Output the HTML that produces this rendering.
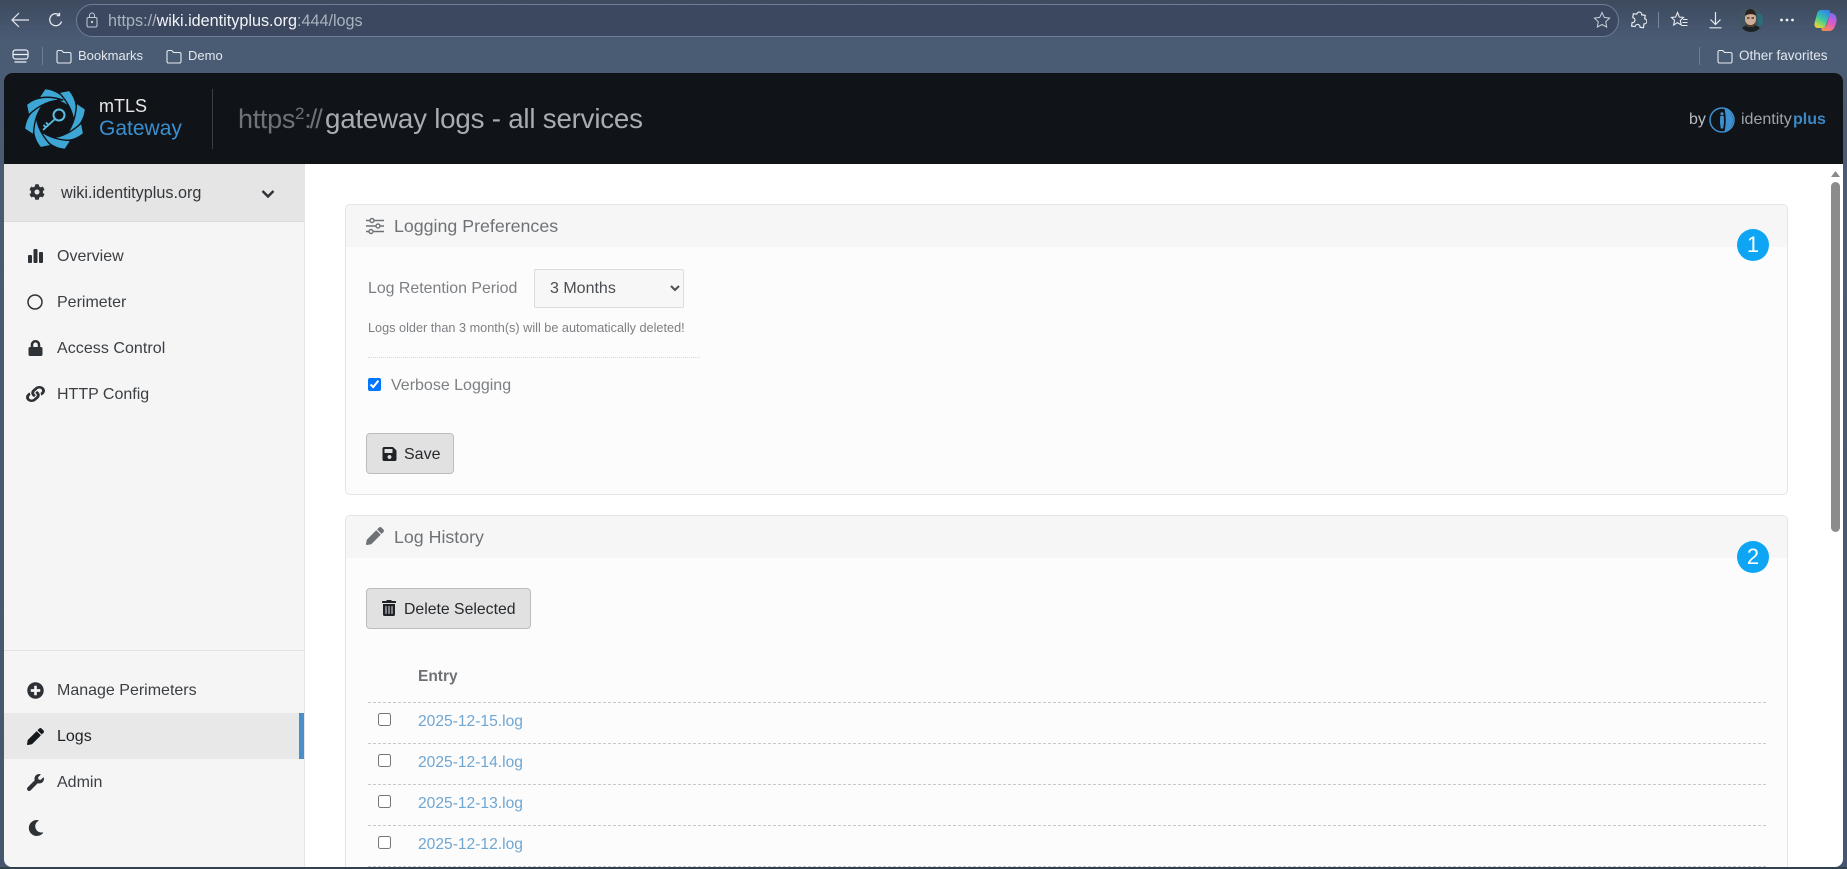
<!DOCTYPE html>
<html lang="en"><head><meta charset="utf-8"><title>gateway logs</title>
<style>
html,body{margin:0;padding:0;width:1847px;height:869px;overflow:hidden}
body{position:relative;background:linear-gradient(180deg,#3d4a5e 0,#4a5b74 40px,#46566e 100%);font-family:"Liberation Sans",sans-serif}
.t{position:absolute;white-space:nowrap;line-height:20px;height:20px}
svg{position:absolute;display:block}
.a{position:absolute}
.nav{font-size:16px;color:#3a3f44}
.bm{font-size:13px;color:#e4e8ee}
.line{position:absolute;left:368px;width:1398px;border-top:1px dashed #c8c8c8;height:0}
.lnk{font-size:15.6px;color:#6fa6d2;left:418px}
input[type=checkbox]{position:absolute;margin:0;width:13px;height:13px}
.btn{position:absolute;box-sizing:border-box;background:#e1e1e1;border:1px solid #bcbcbc;border-radius:4px;height:41px}
.badge{position:absolute;left:1737px;width:32px;height:32px;border-radius:50%;background:#0ea5f5;color:#fff;text-align:center;line-height:32px;font-size:22px}
</style></head><body>

<!-- browser chrome -->
<div class="a" style="left:76px;top:4px;width:1541px;height:31px;border:1px solid #6f7e94;border-radius:17px;background:#3b485f"></div>
<svg style="left:9px;top:10px" width="22" height="20" viewBox="0 0 22 20" fill="none" stroke="#e6eaf0" stroke-width="1.2"><path d="M20 10H3M10 3l-7 7 7 7"/></svg>
<svg style="left:48px;top:12px" width="16" height="16" viewBox="0 0 16 16" fill="none" stroke="#e6eaf0" stroke-width="1.3"><path d="M13.5 9.5A6 6 0 1 1 11.5 3M11.5 .8V3.6H8.7"/></svg>
<svg style="left:86px;top:12px" width="12" height="16" viewBox="0 0 12 16" fill="none" stroke="#c5ccd6" stroke-width="1"><rect x="1" y="5.5" width="10" height="9.5" rx="1.5"/><path d="M3.5 5.5V3.5a2.5 2.5 0 0 1 5 0v2"/><circle cx="6" cy="10" r=".7" fill="#c5ccd6"/></svg>
<span class="t" style="left:108px;top:11px;font-size:16.2px;color:#a9b2be">https://<span style="color:#f2f4f7">wiki.identityplus.org</span>:444/logs</span>
<svg style="left:1593px;top:11px" width="18" height="18" viewBox="0 0 18 18" fill="none" stroke="#c9d0da" stroke-width="1"><path d="M9 1.5l2.3 4.9 5.3.7-3.9 3.7 1 5.3L9 13.5l-4.7 2.6 1-5.3L1.400 7.100l5.300-.7z"/></svg>
<svg style="left:1630px;top:11px" width="17" height="18" viewBox="0 0 17 18" fill="none" stroke="#e6eaf0" stroke-width="1.2"><path d="M6 3.500a2.500 2.500 0 0 1 5 0h3.500v3.500a2.500 2.500 0 0 1 0 5V16H11a2.500 2.500 0 0 0-5 0H2.500v-3.500a2.500 2.500 0 0 0 0-5V3.500z" stroke-linejoin="round" transform="rotate(8 8.500 9)"/></svg>
<div class="a" style="left:1658px;top:12px;width:1px;height:16px;background:#76859a"></div>
<svg style="left:1670px;top:11px" width="18" height="18" viewBox="0 0 18 18" fill="none" stroke="#e6eaf0" stroke-width="1.1"><path d="M7.500 1.500l1.800 4.500 4.200.4-3.200 3 1 4.600-3.800-2.400-3.900 2.400 1-4.600L1.500 6.400l4.200-.4zM13 8.500h4.500M12.500 11.500h5M12 14.500h5.500"/></svg>
<svg style="left:1708px;top:11px" width="15" height="18" viewBox="0 0 15 18" fill="none" stroke="#e6eaf0" stroke-width="1.2"><path d="M7.500 1v12M2.500 8.500l5 5 5-5M1.500 16.800h12"/></svg>
<svg style="left:1739px;top:8px" width="24" height="24" viewBox="0 0 24 24"><defs><clipPath id="av"><circle cx="12" cy="12" r="12"/></clipPath></defs><g clip-path="url(#av)"><rect width="24" height="24" fill="#3f5560"/><path d="M2 24c0-5 4-7 10-7s10 2 10 7z" fill="#1c2226"/><path d="M19 6h5v12h-5z" fill="#2d6b78"/><ellipse cx="11.500" cy="10.500" rx="5.500" ry="7.500" fill="#cfae98"/><path d="M6 8c0-5 3-7 5.500-7S17 3 17 8c-2-2.500-8-2.500-11 0z" fill="#2a2320"/><path d="M7 14c1 4 8 4 9 0l-1 5H8z" fill="#54402f"/><path d="M8 10h2.500M12.500 10H15" stroke="#2a2320" stroke-width="1.200"/></g></svg>
<svg style="left:1779px;top:17px" width="16" height="6" viewBox="0 0 16 6" fill="#f0f2f5"><circle cx="2.500" cy="3" r="1.400"/><circle cx="8" cy="3" r="1.400"/><circle cx="13.500" cy="3" r="1.400"/></svg>
<svg style="left:1814px;top:9px" width="23" height="23" viewBox="0 0 23 23"><defs><linearGradient id="c1" x1="0.700" y1="0" x2="0.200" y2="1"><stop offset="0" stop-color="#2f86ee"/><stop offset=".5" stop-color="#38c8a0"/><stop offset=".85" stop-color="#b8d84a"/><stop offset="1" stop-color="#f5c83e"/></linearGradient><linearGradient id="c2" x1="0.700" y1="0" x2="0.300" y2="1"><stop offset="0" stop-color="#7a6cf0"/><stop offset=".5" stop-color="#e058c8"/><stop offset="1" stop-color="#f88a50"/></linearGradient></defs><path d="M7 1h7c2 0 2.500 1.500 2 3L12 16c-.6 2-2 3-4 3H4c-3 0-4-2.500-3.400-5L3 5c.6-2.500 2-4 4-4z" fill="url(#c1)"/><path d="M16 4c3 0 6 1.500 6.500 5 .3 3-.5 6-1.500 8-1 3-3 5-5.500 5H10c-2 0-3-1-2.500-3 3 0 4.500-1 5.500-4z" fill="url(#c2)"/></svg>

<svg style="left:12px;top:48px" width="17" height="16" viewBox="0 0 17 16" fill="none" stroke="#eef1f5" stroke-width="1.2"><rect x="1" y="2" width="15" height="9" rx="2.500"/><path d="M1.500 6.500h14M2.500 14h12"/></svg>
<div class="a" style="left:42px;top:47px;width:1px;height:18px;background:#6e7d92"></div>
<svg style="left:56px;top:49px" width="16" height="15" viewBox="0 0 16 15" fill="none" stroke="#e6eaf0" stroke-width="1.1"><path d="M1 3a1.500 1.500 0 0 1 1.500-1.500h3.300L7.500 3.500h6A1.500 1.500 0 0 1 15 5v7.500a1.500 1.500 0 0 1-1.500 1.500h-11A1.500 1.500 0 0 1 1 12.500z"/></svg>
<span class="t bm" style="left:78px;top:46px">Bookmarks</span>
<svg style="left:166px;top:49px" width="16" height="15" viewBox="0 0 16 15" fill="none" stroke="#e6eaf0" stroke-width="1.1"><path d="M1 3a1.500 1.500 0 0 1 1.500-1.500h3.300L7.500 3.500h6A1.500 1.500 0 0 1 15 5v7.500a1.500 1.500 0 0 1-1.500 1.500h-11A1.500 1.500 0 0 1 1 12.500z"/></svg>
<span class="t bm" style="left:188px;top:46px">Demo</span>
<div class="a" style="left:1699px;top:47px;width:1px;height:18px;background:#6e7d92"></div>
<svg style="left:1717px;top:49px" width="16" height="15" viewBox="0 0 16 15" fill="none" stroke="#e6eaf0" stroke-width="1.1"><path d="M1 3a1.500 1.500 0 0 1 1.500-1.500h3.300L7.500 3.500h6A1.500 1.500 0 0 1 15 5v7.500a1.500 1.500 0 0 1-1.500 1.500h-11A1.500 1.500 0 0 1 1 12.500z"/></svg>
<span class="t bm" style="left:1739px;top:46px;font-size:13.500px">Other favorites</span>

<!-- window -->
<div class="a" style="left:4px;top:73px;width:1839px;height:794px;border-radius:8px;overflow:hidden;background:#fff">
  <div class="a" style="left:0;top:0;width:1839px;height:91px;background:#101418"></div>
  <div class="a" style="left:0;top:91px;width:300px;height:703px;background:#f5f5f5;border-right:1px solid #e4e4e4"></div>
  <div class="a" style="left:0;top:91px;width:300px;height:58px;background:#e5e5e5;border-bottom:1px solid #dadada;box-sizing:border-box"></div>
  <div class="a" style="left:0;top:577px;width:300px;height:1px;background:#e2e2e2"></div>
  <div class="a" style="left:0;top:640px;width:300px;height:46px;background:#e8e8e8"></div>
  <div class="a" style="left:295px;top:640px;width:5px;height:46px;background:#4a8fc9"></div>
</div>

<!-- logo -->
<svg style="left:23px;top:87px" width="64" height="64" viewBox="-32 -32 64 64">
<defs><linearGradient id="lg" x1="0" y1="0" x2="1" y2="1"><stop offset="0" stop-color="#5cc0e4"/><stop offset="1" stop-color="#2f8fc0"/></linearGradient>
<path id="bl" d="M-10 -30.500Q8 -29 19 -8Q6 -21 -16 -21.500Z" fill="#3ea6d4" stroke="#101418" stroke-width="1.400" stroke-linejoin="round"/></defs>
<use href="#bl"/><use href="#bl" transform="rotate(45)"/><use href="#bl" transform="rotate(90)"/><use href="#bl" transform="rotate(135)"/><use href="#bl" transform="rotate(180)"/><use href="#bl" transform="rotate(225)"/><use href="#bl" transform="rotate(270)"/><use href="#bl" transform="rotate(315)"/>
<circle cx="4" cy="-4" r="5.500" fill="#101418" stroke="#5cbde2" stroke-width="2"/>
<path d="M0 0L-12 11M-9 8.500l-2.500-2.500M-6.500 6l-2.500-2.500" fill="none" stroke="#5cbde2" stroke-width="1.800"/>
</svg>
<span class="t" style="left:99px;top:96px;font-size:18px;color:#e8e8e8">mTLS</span>
<span class="t" style="left:99px;top:119px;font-size:21px;color:#3a8fd0">Gateway</span>
<div class="a" style="left:212px;top:89px;width:1px;height:60px;background:#3a3f44"></div>
<span class="t" style="left:238px;top:105px;font-size:27px;line-height:28px;height:28px;color:#6f7377;letter-spacing:-.3px">https<span style="font-size:17px;position:relative;top:-9px">2</span><span style="letter-spacing:-2px">://</span></span>
<span class="t" style="left:325px;top:105px;font-size:27.700px;line-height:28px;height:28px;color:#a9adb1;letter-spacing:-.2px">gateway logs - all services</span>
<span class="t" style="left:1689px;top:110px;font-size:16px;color:#b9bdc1">by</span>
<svg style="left:1709px;top:107px" width="26" height="26" viewBox="0 0 26 26"><circle cx="13" cy="13" r="12" fill="#101418" stroke="#3c90d0" stroke-width="1.500"/><path d="M15.500 1.500a12 12 0 0 1 0 23Q18 13 15.500 1.500z" fill="#3c90d0"/><circle cx="13" cy="6.800" r="1.600" fill="#3c90d0"/><path d="M11.200 9h3.600l.2 6.500-.8 6h-2.400l-.8-6z" fill="#3c90d0"/></svg>
<span class="t" style="left:1741px;top:110px;font-size:16px;color:#a0a5aa">identity</span>
<span class="t" style="left:1793px;top:110px;font-size:16px;font-weight:bold;color:#3c87c4">plus</span>

<!-- sidebar -->
<svg style="left:29px;top:184px" width="16" height="16" viewBox="0 0 512 512" fill="#2e3236"><path d="M487.4 315.7l-42.6-24.6c4.300-23.200 4.300-47 0-70.200l42.600-24.600c4.900-2.800 7.100-8.600 5.500-14-11.100-35.600-30-67.800-54.700-94.600-3.800-4.100-10-5.100-14.800-2.300L380.800 110c-17.900-15.400-38.500-27.300-60.800-35.100V25.800c0-5.600-3.900-10.500-9.400-11.700-36.700-8.200-74.300-7.800-109.200 0-5.500 1.200-9.400 6.100-9.400 11.700V75c-22.200 7.900-42.800 19.800-60.800 35.100L88.700 85.500c-4.900-2.800-11-1.900-14.800 2.300-24.700 26.700-43.600 58.900-54.700 94.600-1.700 5.400.6 11.200 5.500 14L67.300 221c-4.300 23.200-4.300 47 0 70.200l-42.600 24.600c-4.900 2.800-7.100 8.600-5.500 14 11.100 35.600 30 67.800 54.700 94.600 3.800 4.100 10 5.100 14.800 2.300l42.600-24.600c17.900 15.400 38.500 27.300 60.800 35.100v49.200c0 5.600 3.900 10.500 9.400 11.700 36.700 8.200 74.300 7.800 109.200 0 5.500-1.200 9.400-6.100 9.400-11.700v-49.200c22.200-7.900 42.800-19.800 60.800-35.100l42.600 24.600c4.900 2.800 11 1.900 14.800-2.300 24.700-26.700 43.600-58.900 54.700-94.600 1.500-5.500-.7-11.300-5.600-14.100zM256 336c-44.100 0-80-35.900-80-80s35.900-80 80-80 80 35.900 80 80-35.900 80-80 80z"/></svg>
<span class="t nav" style="left:61px;top:183px;font-size:16.200px;color:#33373b">wiki.identityplus.org</span>
<svg style="left:261px;top:189px" width="14" height="10" viewBox="0 0 14 10" fill="none" stroke="#2e3236" stroke-width="2.400"><path d="M1.500 2l5.500 5.500L12.500 2"/></svg>

<svg style="left:28px;top:249px" width="15" height="14" viewBox="0 0 15 14" fill="#2e3236"><rect x="0" y="6" width="4" height="8" rx="1"/><rect x="5.500" y="0" width="4" height="14" rx="1"/><rect x="11" y="3" width="4" height="11" rx="1"/></svg>
<span class="t nav" style="left:57px;top:247px">Overview</span>
<svg style="left:27px;top:294px" width="16" height="16" viewBox="0 0 16 16" fill="none" stroke="#2e3236" stroke-width="1.500"><circle cx="8" cy="8" r="7"/></svg>
<span class="t nav" style="left:57px;top:293px">Perimeter</span>
<svg style="left:28px;top:340px" width="15" height="16" viewBox="0 0 448 512" fill="#2e3236"><path d="M400 224h-24v-72C376 68.200 307.800 0 224 0S72 68.200 72 152v72H48c-26.500 0-48 21.500-48 48v192c0 26.500 21.500 48 48 48h352c26.500 0 48-21.500 48-48V272c0-26.500-21.500-48-48-48zm-104 0H152v-72c0-39.700 32.300-72 72-72s72 32.300 72 72v72z"/></svg>
<span class="t nav" style="left:57px;top:339px;letter-spacing:.05px">Access Control</span>
<svg style="left:26px;top:386px" width="19" height="16" viewBox="0 0 512 512" preserveAspectRatio="none" fill="#2e3236"><path d="M326.612 185.391c59.747 59.809 58.927 155.698.36 214.590-.11.120-.24.250-.36.370l-67.200 67.200c-59.270 59.270-155.699 59.262-214.960 0-59.270-59.260-59.270-155.700 0-214.960l37.106-37.106c9.840-9.840 26.786-3.300 27.294 10.606.648 17.722 3.826 35.527 9.690 52.721 1.986 5.822.567 12.262-3.783 16.612l-13.087 13.087c-28.026 28.026-28.905 73.660-1.155 101.960 28.024 28.579 74.086 28.749 102.325.51l67.200-67.190c28.191-28.191 28.073-73.757 0-101.830-3.701-3.694-7.429-6.564-10.341-8.569a16.037 16.037 0 0 1-6.947-12.606c-.396-10.567 3.348-21.456 11.698-29.806l21.054-21.055c5.521-5.521 14.182-6.199 20.584-1.731a152.482 152.482 0 0 1 20.522 17.197zM467.547 44.449c-59.261-59.262-155.690-59.270-214.960 0l-67.200 67.200c-.12.120-.25.250-.36.370-58.566 58.892-59.387 154.781.36 214.590a152.454 152.454 0 0 0 20.521 17.196c6.402 4.468 15.064 3.789 20.584-1.731l21.054-21.055c8.350-8.350 12.094-19.239 11.698-29.806a16.037 16.037 0 0 0-6.947-12.606c-2.912-2.005-6.640-4.875-10.341-8.569-28.073-28.073-28.191-73.639 0-101.830l67.200-67.190c28.239-28.239 74.300-28.069 102.325.51 27.750 28.300 26.872 73.934-1.155 101.960l-13.087 13.087c-4.350 4.350-5.769 10.790-3.783 16.612 5.864 17.194 9.042 34.999 9.690 52.721.509 13.906 17.454 20.446 27.294 10.606l37.106-37.106c59.271-59.259 59.271-155.699.001-214.959z"/></svg>
<span class="t nav" style="left:57px;top:385px">HTTP Config</span>

<svg style="left:27px;top:682px" width="17" height="17" viewBox="0 0 512 512" fill="#2e3236"><path d="M256 8C119 8 8 119 8 256s111 248 248 248 248-111 248-248S393 8 256 8zm144 276c0 6.600-5.400 12-12 12h-92v92c0 6.600-5.400 12-12 12h-56c-6.600 0-12-5.400-12-12v-92h-92c-6.600 0-12-5.400-12-12v-56c0-6.600 5.400-12 12-12h92v-92c0-6.600 5.400-12 12-12h56c6.600 0 12 5.400 12 12v92h92c6.600 0 12 5.400 12 12v56z"/></svg>
<span class="t nav" style="left:57px;top:681px">Manage Perimeters</span>
<svg style="left:27px;top:728px" width="17" height="17" viewBox="0 0 512 512" fill="#16191c"><path d="M497.900 142.100l-46.100 46.100c-4.700 4.700-12.300 4.700-17 0l-111-111c-4.700-4.700-4.700-12.300 0-17l46.100-46.100c18.700-18.700 49.100-18.700 67.900 0l60.100 60.100c18.800 18.700 18.800 49.100 0 67.900zM284.200 99.800L21.600 362.400.4 483.900c-2.900 16.400 11.400 30.600 27.800 27.800l121.500-21.300 262.600-262.600c4.700-4.700 4.700-12.300 0-17l-111-111c-4.800-4.700-12.400-4.700-17.100 0z"/></svg>
<span class="t nav" style="left:57px;top:727px;color:#1d2125">Logs</span>
<svg style="left:27px;top:774px" width="17" height="17" viewBox="0 0 512 512" fill="#2e3236"><path d="M507.730 109.100c-2.240-9.030-13.540-12.090-20.120-5.510l-74.360 74.360-67.880-11.310-11.310-67.880 74.360-74.360c6.620-6.620 3.430-17.900-5.660-20.160-47.380-11.740-99.550.91-136.580 37.930-39.640 39.640-50.550 97.100-34.050 147.200L18.740 402.760c-24.990 24.990-24.990 65.510 0 90.500 24.990 24.990 65.510 24.990 90.500 0l213.210-213.210c50.120 16.710 107.470 5.680 147.370-34.220 37.070-37.070 49.700-89.320 37.910-136.730z"/></svg>
<span class="t nav" style="left:57px;top:773px">Admin</span>
<svg style="left:28px;top:820px" width="16" height="16" viewBox="0 0 512 512" fill="#2e3236"><path d="M283.211 512c78.962 0 151.079-35.925 198.857-94.792 7.068-8.708-.639-21.430-11.562-19.350-124.203 23.654-238.262-71.576-238.262-196.954 0-72.222 38.662-138.635 101.498-174.394 9.686-5.512 7.250-20.197-3.756-22.230A258.156 258.156 0 0 0 283.211 0c-141.309 0-256 114.511-256 256 0 141.309 114.511 256 256 256z"/></svg>

<!-- panel 1 -->
<div class="a" style="left:345px;top:204px;width:1443px;height:291px;box-sizing:border-box;border:1px solid #e4e4e4;border-radius:5px;background:#fcfcfc"></div>
<div class="a" style="left:346px;top:205px;width:1441px;height:42px;border-radius:4px 4px 0 0;background:#f6f6f6"></div>
<svg style="left:366px;top:217px" width="18" height="18" viewBox="0 0 18 18" fill="none" stroke="#6e7276" stroke-width="1.400"><path d="M0 3.500h18M0 9h18M0 14.500h18"/><circle cx="6" cy="3.500" r="2" fill="#f6f6f6"/><circle cx="12" cy="9" r="2" fill="#f6f6f6"/><circle cx="5" cy="14.500" r="2" fill="#f6f6f6"/></svg>
<span class="t" style="left:394px;top:216px;font-size:17.800px;color:#6e7276">Logging Preferences</span>
<span class="t" style="left:368px;top:279px;font-size:15.900px;color:#7c8084">Log Retention Period</span>
<select style="position:absolute;left:534px;top:269px;width:150px;height:39px;box-sizing:border-box;padding:0 11px;background:#f7f7f7;border:1px solid #dcdcdc;border-radius:2px;font:16px 'Liberation Sans',sans-serif;color:#4a4e52"><option>3 Months</option></select>
<span class="t" style="left:368px;top:318px;font-size:12.700px;color:#7c8084">Logs older than 3 month(s) will be automatically deleted!</span>
<div class="a" style="left:368px;top:357px;width:332px;border-top:1px dotted #d8d8d8"></div>
<input type="checkbox" checked style="left:368px;top:378px">
<span class="t" style="left:391px;top:376px;font-size:16px;color:#7c8084">Verbose Logging</span>
<div class="btn" style="left:366px;top:433px;width:88px"></div>
<svg style="left:382px;top:446px" width="15" height="16" viewBox="0 0 448 512" fill="#1f2327"><path d="M433.941 129.941l-83.882-83.882A48 48 0 0 0 316.118 32H48C21.490 32 0 53.490 0 80v352c0 26.510 21.490 48 48 48h352c26.510 0 48-21.490 48-48V163.882a48 48 0 0 0-14.059-33.941zM224 416c-35.346 0-64-28.654-64-64 0-35.346 28.654-64 64-64s64 28.654 64 64c0 35.346-28.654 64-64 64zm96-304.520V212c0 6.627-5.373 12-12 12H76c-6.627 0-12-5.373-12-12V108c0-6.627 5.373-12 12-12h228.520c3.183 0 6.235 1.264 8.485 3.515l3.480 3.480A11.996 11.996 0 0 1 320 111.480z"/></svg>
<span class="t" style="left:404px;top:445px;font-size:16px;color:#26292d">Save</span>
<div class="badge" style="top:229px">1</div>

<!-- panel 2 -->
<div class="a" style="left:345px;top:515px;width:1443px;height:360px;box-sizing:border-box;border:1px solid #e4e4e4;border-radius:5px;background:#fcfcfc"></div>
<div class="a" style="left:346px;top:516px;width:1441px;height:42px;border-radius:4px 4px 0 0;background:#f6f6f6"></div>
<svg style="left:366px;top:527px" width="18" height="18" viewBox="0 0 512 512" fill="#6e7276"><path d="M497.900 142.100l-46.100 46.100c-4.700 4.700-12.300 4.700-17 0l-111-111c-4.700-4.700-4.700-12.300 0-17l46.100-46.100c18.700-18.700 49.100-18.700 67.900 0l60.100 60.100c18.800 18.700 18.800 49.100 0 67.900zM284.200 99.800L21.600 362.400.4 483.900c-2.900 16.400 11.400 30.600 27.800 27.800l121.500-21.300 262.600-262.600c4.700-4.700 4.700-12.300 0-17l-111-111c-4.800-4.700-12.400-4.700-17.100 0z"/></svg>
<span class="t" style="left:394px;top:527px;font-size:17.800px;color:#6e7276">Log History</span>
<div class="btn" style="left:366px;top:588px;width:165px"></div>
<svg style="left:382px;top:600px" width="14" height="16" viewBox="0 0 448 512" fill="#1f2327"><path d="M32 464a48 48 0 0 0 48 48h288a48 48 0 0 0 48-48V128H32zm272-256a16 16 0 0 1 32 0v224a16 16 0 0 1-32 0zm-96 0a16 16 0 0 1 32 0v224a16 16 0 0 1-32 0zm-96 0a16 16 0 0 1 32 0v224a16 16 0 0 1-32 0zM432 32H312l-9.400-18.700A24 24 0 0 0 281.100 0H166.800a23.720 23.720 0 0 0-21.400 13.300L136 32H16A16 16 0 0 0 0 48v32a16 16 0 0 0 16 16h416a16 16 0 0 0 16-16V48a16 16 0 0 0-16-16z"/></svg>
<span class="t" style="left:404px;top:600px;font-size:15.800px;color:#26292d">Delete Selected</span>
<span class="t" style="left:418px;top:667px;font-size:15.500px;font-weight:bold;color:#6e7276">Entry</span>
<div class="line" style="top:702px"></div>
<input type="checkbox" style="left:378px;top:713px"><span class="t lnk" style="top:712px">2025-12-15.log</span>
<div class="line" style="top:743px"></div>
<input type="checkbox" style="left:378px;top:754px"><span class="t lnk" style="top:753px">2025-12-14.log</span>
<div class="line" style="top:784px"></div>
<input type="checkbox" style="left:378px;top:795px"><span class="t lnk" style="top:794px">2025-12-13.log</span>
<div class="line" style="top:825px"></div>
<input type="checkbox" style="left:378px;top:836px"><span class="t lnk" style="top:835px">2025-12-12.log</span>
<div class="line" style="top:866px"></div>
<div class="badge" style="top:541px">2</div>

<!-- scrollbar -->
<svg style="left:1831px;top:170px" width="9" height="8" viewBox="0 0 9 8" fill="#8a8a8a"><path d="M4.500 1L9 7H0z"/></svg>
<div class="a" style="left:1831px;top:182px;width:9px;height:350px;border-radius:5px;background:#8c8c8c"></div>

<!-- bottom chrome strip -->
<div class="a" style="left:0;top:867px;width:1847px;height:2px;background:#33414f"></div>
</body></html>
